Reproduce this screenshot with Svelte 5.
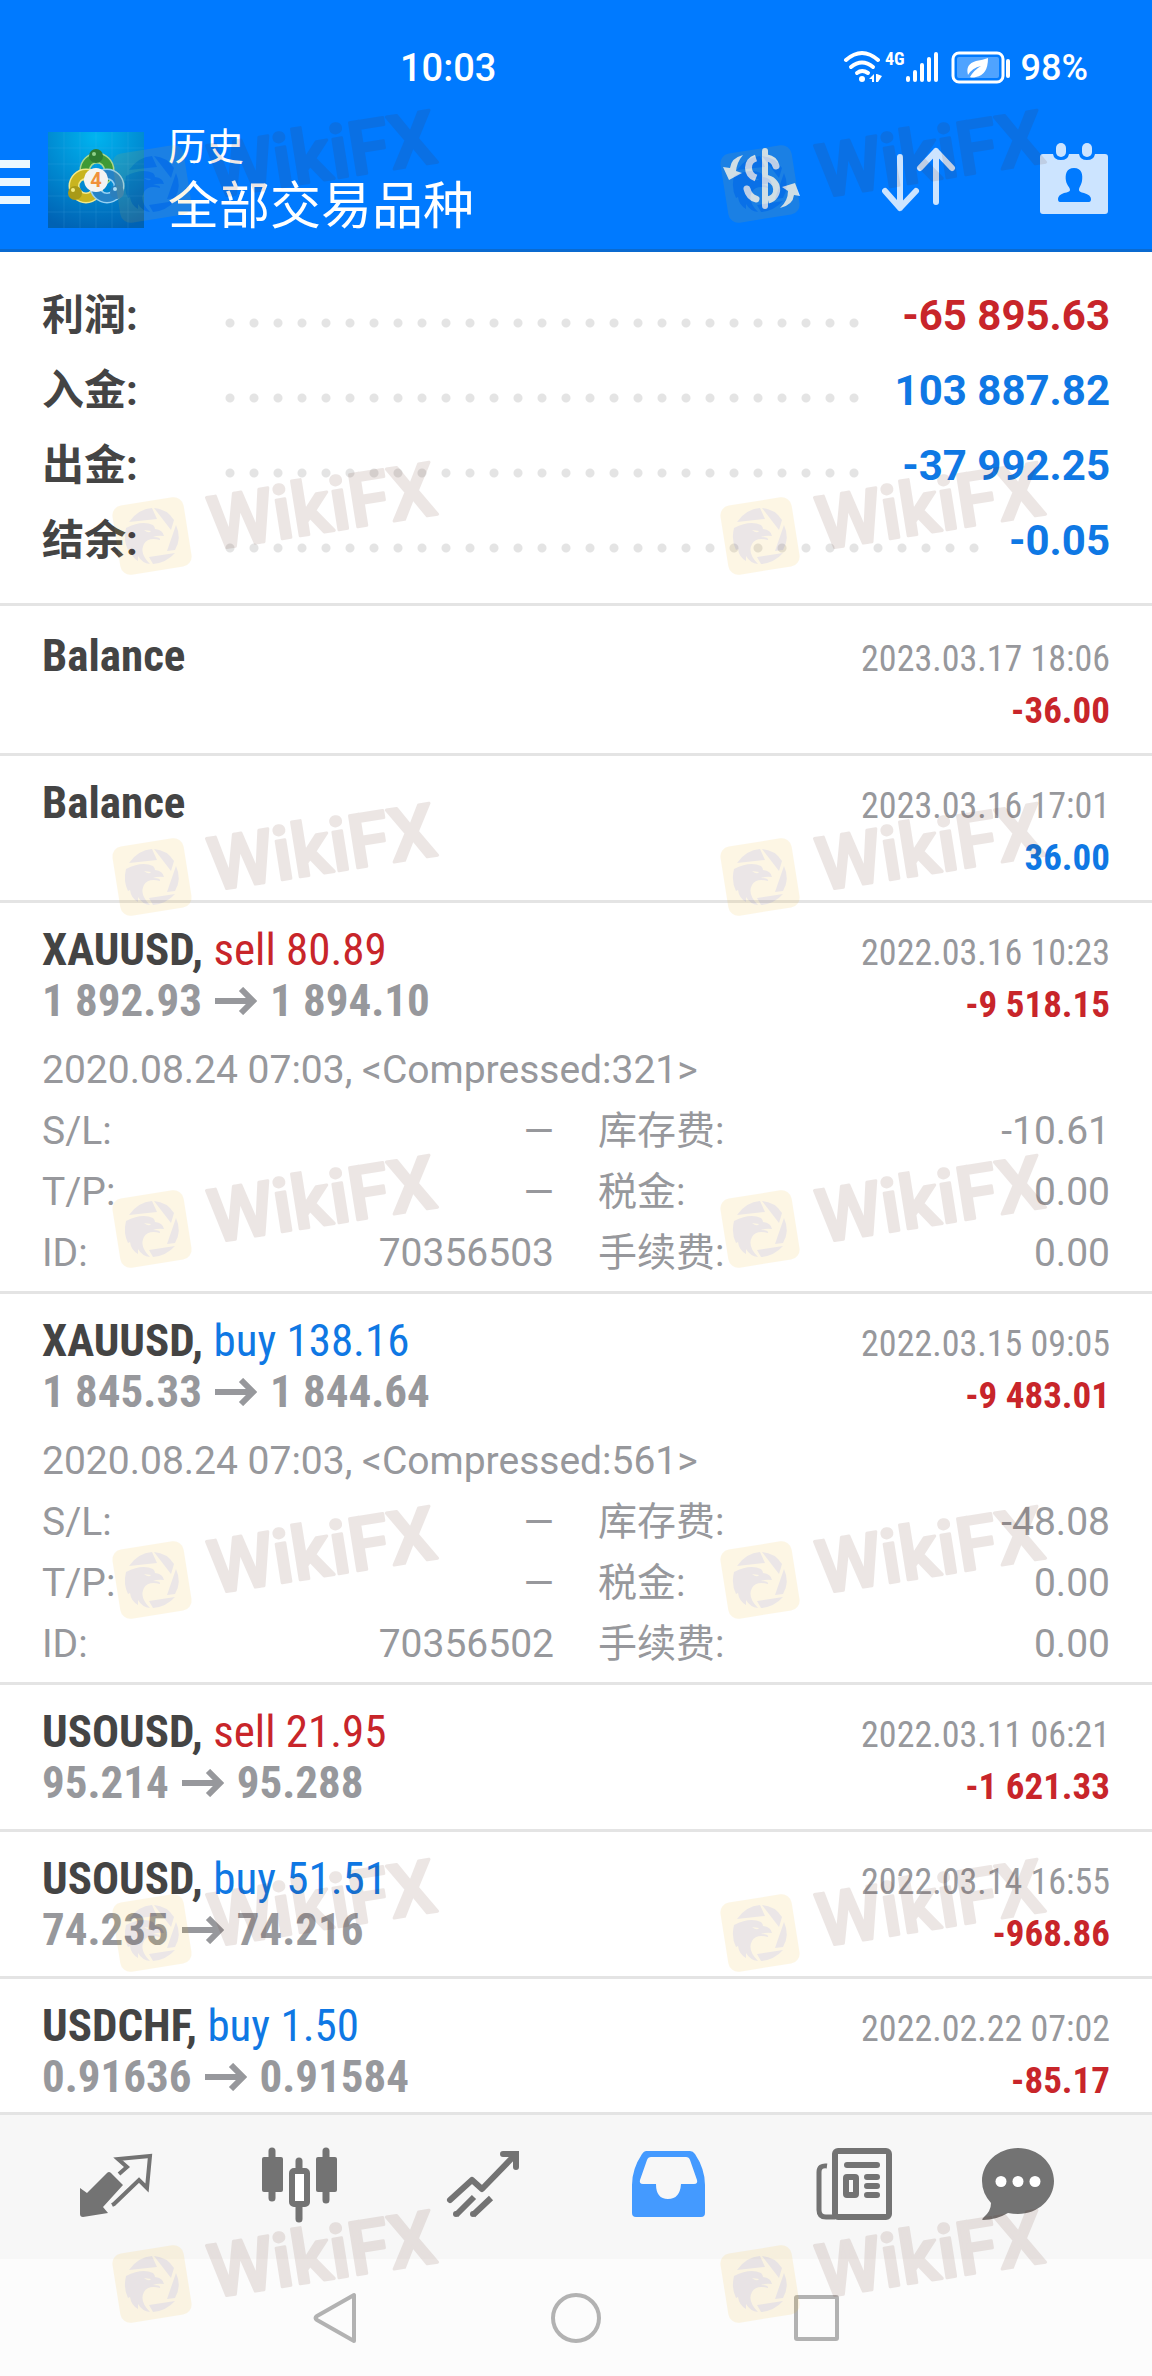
<script>
  const summary = [
    { label: '利润:', value: '-65 895.63', tone: 'red' },
    { label: '入金:', value: '103 887.82', tone: 'blue' },
    { label: '出金:', value: '-37 992.25', tone: 'blue' },
    { label: '结余:', value: '-0.05',      tone: 'blue' },
  ];

  const deals = [
    { symbol: 'Balance', time: '2023.03.17 18:06', profit: '-36.00' },
    { symbol: 'Balance', time: '2023.03.16 17:01', profit: '36.00' },
    {
      symbol: 'XAUUSD', side: 'sell', volume: '80.89', open: '1 892.93', close: '1 894.10',
      time: '2022.03.16 10:23', profit: '-9 518.15',
      note: '2020.08.24 07:03, <Compressed:321>', id: '70356503', swap: '-10.61',
    },
    {
      symbol: 'XAUUSD', side: 'buy', volume: '138.16', open: '1 845.33', close: '1 844.64',
      time: '2022.03.15 09:05', profit: '-9 483.01',
      note: '2020.08.24 07:03, <Compressed:561>', id: '70356502', swap: '-48.08',
    },
    { symbol: 'USOUSD', side: 'sell', volume: '21.95', open: '95.214', close: '95.288', time: '2022.03.11 06:21', profit: '-1 621.33' },
    { symbol: 'USOUSD', side: 'buy', volume: '51.51', open: '74.235', close: '74.216', time: '2022.03.14 16:55', profit: '-968.86' },
    { symbol: 'USDCHF', side: 'buy', volume: '1.50', open: '0.91636', close: '0.91584', time: '2022.02.22 07:02', profit: '-85.17' },
  ];

  const tabs = [
    { id: 'quotes',  label: '行情' },
    { id: 'charts',  label: '图表' },
    { id: 'trade',   label: '交易' },
    { id: 'history', label: '历史' },
    { id: 'news',    label: '新闻' },
    { id: 'chat',    label: '消息' },
  ];
  let activeTab = $state('history');

  // watermark tiles, [x, y] of the badge centre
  const marks = [184, 536, 877, 1229, 1580, 1933, 2284].flatMap((y) => [[152, y], [760, y]]);

  function details(deal) {
    return [
      ['S/L:', '—', '库存费:', deal.swap],
      ['T/P:', '—', '税金:', '0.00'],
      ['ID:', deal.id, '手续费:', '0.00'],
    ];
  }
</script>

<div class="screen">
  <header>
    <!-- ── Status bar ── -->
    <div class="status">
      <span class="clock">10:03</span>
      <div class="status-icons">
        <svg width="44" height="40" viewBox="0 0 44 40" fill="none" stroke="#fff" stroke-width="4" stroke-linecap="round">
          <path d="M5 12Q21 -2 37 12" />
          <path d="M10 19Q21 10 32 19" />
          <path d="M16 25Q21 21 27 25" />
          <circle cx="21" cy="31" r="3" fill="#fff" stroke="none" />
          <path d="M28 31L33 26V34H31V31ZM36 26L41 28L37 34H35V26Z" fill="#fff" stroke="none" />
        </svg>
        <span class="net">4G</span>
        <svg width="34" height="40" viewBox="0 0 34 40" stroke="#fff" stroke-width="4" stroke-linecap="round">
          <path d="M3 30V32M10 24V32M17 17V32M24 11V32M31 6V32" />
        </svg>
        <svg class="battery" width="62" height="40" viewBox="0 0 62 40">
          <rect x="2" y="5" width="50" height="29" rx="6" fill="none" stroke="#fff" stroke-width="3" />
          <rect x="6" y="9" width="42" height="21" rx="2" fill="#4fa3ff" />
          <path d="M57 13V28" stroke="#fff" stroke-width="4" stroke-linecap="round" />
          <path d="M17 27Q14 16 25 13Q32 12 37 10Q37 27 25 29Q21 30 19 29Q23 22 30 18Q21 20 17 27Z" fill="#fff" />
        </svg>
        <span class="percent">98%</span>
      </div>
    </div>

    <!-- ── App bar ── -->
    <div class="appbar">
      <button class="menu" aria-label="菜单">
        <svg width="30" height="48" viewBox="0 -4 30 48" fill="#ebf8ff">
          <path d="M0 0H30V8H0ZM0 18H30V26H0ZM0 36H30V44H0Z" />
        </svg>
      </button>
      <svg class="logo" width="96" height="96" viewBox="0 0 96 96">
        <defs>
          <radialGradient id="sky" cx="50%" cy="5%" r="100%">
            <stop offset="0" stop-color="#00b4f0" />
            <stop offset="0.55" stop-color="#0087cf" />
            <stop offset="1" stop-color="#0062b4" />
          </radialGradient>
        </defs>
        <rect width="96" height="96" fill="url(#sky)" />
        <path d="M16 0V96M32 0V96M48 0V96M64 0V96M80 0V96M0 16H96M0 32H96M0 48H96M0 64H96M0 80H96" stroke="#5cc4f0" stroke-opacity="0.15" />
        <g fill="none" stroke-linecap="round">
          <circle cx="49" cy="38" r="12" stroke="#a9d890" stroke-width="11" />
          <circle cx="49" cy="38" r="12" stroke="#3f9a35" stroke-width="8" />
          <circle cx="38" cy="54" r="12" stroke="#f3e98a" stroke-width="11" />
          <circle cx="38" cy="54" r="12" stroke="#c8b41f" stroke-width="8" />
          <circle cx="59" cy="54" r="12" stroke="#95d0f2" stroke-width="11" />
          <circle cx="59" cy="54" r="12" stroke="#2683c6" stroke-width="8" />
        </g>
        <circle cx="48" cy="24" r="7" fill="#2e7d32" />
        <circle cx="46" cy="22" r="2" fill="#8fd08a" />
        <circle cx="27" cy="61" r="7" fill="#a89a18" />
        <circle cx="25" cy="58" r="2" fill="#f2ea80" />
        <circle cx="69" cy="60" r="7" fill="#2b7fbd" />
        <circle cx="67" cy="57" r="2" fill="#a8dcf7" />
        <circle cx="48" cy="48" r="12" fill="#f4f4f2" />
        <text x="48" y="55" text-anchor="middle" font-size="20" font-weight="700" fill="#f0913a">4</text>
      </svg>
      <div class="titles">
        <span class="section">历史</span>
        <h1>全部交易品种</h1>
      </div>
      <div class="actions">
        <button aria-label="货币">
          <svg width="78" height="80" viewBox="0 0 78 80" fill="#cce4ff">
            <path d="M43 11V66" stroke="#cce4ff" stroke-width="6" stroke-linecap="round" />
            <g fill="none" stroke="#cce4ff" stroke-width="7">
              <path d="M34 18C24 21 24 34 34 38" />
              <path d="M45 18Q52 19 54 26" stroke-linecap="round" />
              <path d="M43 38C58 40 58 57 46 60" />
              <path d="M25 49Q27 57 34 59" stroke-linecap="round" />
            </g>
            <path d="M21 15Q9 18 8 28L1 27L7 40L20 33L14 31Q15 22 21 15Z" />
            <path d="M58 68Q71 65 72 55L78 56L73 43L60 47L66 51Q66 61 58 68Z" />
          </svg>
        </button>
        <button aria-label="排序">
          <svg width="76" height="80" viewBox="0 0 76 80" fill="none" stroke="#cce4ff" stroke-width="6" stroke-linecap="round" stroke-linejoin="round">
            <path d="M18 17V68M3 51L18 68L34 51M54 62V11M38 28L54 11L70 28" />
          </svg>
        </button>
        <button aria-label="日期">
          <svg width="68" height="80" viewBox="0 0 68 80" fill="#cce4ff">
            <path d="M3 14H13Q14 20 21 20T29 14H39Q40 20 47 20T55 14H65Q68 14 68 17V71Q68 74 65 74H3Q0 74 0 71V17Q0 14 3 14Z" />
            <rect x="16" y="3" width="10" height="14" rx="5" />
            <rect x="42" y="3" width="10" height="14" rx="5" />
            <path d="M34 28C42 28 43 35 42 41C41 46 39 47 39 50Q39 52 44 53Q51 55 51 59Q51 62 49 62H20Q18 62 18 59Q18 55 24 53Q30 52 30 50C30 47 27 46 26 41C25 35 26 28 34 28Z" fill="#007aff" />
          </svg>
        </button>
      </div>
    </div>
  </header>

  <main>
    <dl class="summary">
      {#each summary as row}
        <div class="sum-row">
          <dt>{row.label}</dt>
          <span class="leader"></span>
          <dd class={row.tone}>{row.value}</dd>
        </div>
      {/each}
    </dl>

    <ul class="deals">
      {#each deals as deal}
        <li class:open={deal.note}>
          <div class="head">
            <div class="left">
              <div class="name">
                {#if deal.side}
                  <b>{deal.symbol},</b> <span class:red={deal.side === 'sell'} class:blue={deal.side === 'buy'}>{deal.side} {deal.volume}</span>
                {:else}
                  <b>{deal.symbol}</b>
                {/if}
              </div>
              {#if deal.open}
                <div class="prices">
                  <span>{deal.open}</span>
                  <svg width="42" height="28" viewBox="0 0 42 28" fill="none" stroke="#97989c" stroke-width="6">
                    <path d="M0 14H38M26 2L38 14L26 26" />
                  </svg>
                  <span>{deal.close}</span>
                </div>
              {/if}
            </div>
            <div class="right">
              <time>{deal.time}</time>
              <b class={deal.profit.startsWith('-') ? 'red' : 'blue'}>{deal.profit}</b>
            </div>
          </div>
          {#if deal.note}
            <div class="extra">
              <p>{deal.note}</p>
              {#each details(deal) as [l1, v1, l2, v2]}
                <div class="pair"><span>{l1}</span><span>{v1}</span></div>
                <div class="pair"><span>{l2}</span><span>{v2}</span></div>
              {/each}
            </div>
          {/if}
        </li>
      {/each}
    </ul>
  </main>

  <nav class="tabs">
    {#each tabs as tab}
      <button class:active={activeTab === tab.id} aria-label={tab.label} onclick={() => (activeTab = tab.id)}>
        <svg width="80" height="80" viewBox="0 0 80 80" fill="currentColor">
          {#if tab.id === 'quotes'}
            <path d="M4 41L11 46L31 26Q33 24 35 26L47 38L27 60L32 66L7 70Q4 70 4 67Z" />
            <path d="M36 58L38 57L63 33L71 41L74 9L42 12L51 20L43 27" fill="none" stroke="currentColor" stroke-width="4" />
          {:else if tab.id === 'charts'}
            <path d="M12 4V51M39 14V22M39 58V72M66 4V53" stroke="currentColor" stroke-width="7" stroke-linecap="round" />
            <rect x="2" y="10" width="21" height="35" rx="2" />
            <rect x="56" y="10" width="21" height="35" rx="2" />
            <rect x="32" y="24" width="15" height="33" rx="2" fill="#fff" stroke="currentColor" stroke-width="6" />
          {:else if tab.id === 'trade'}
            <g fill="none" stroke="currentColor" stroke-width="6">
              <path d="M6 53L28 33L38 42L71 8" stroke-linejoin="round" stroke-linecap="round" />
              <path d="M59 7H72V20" stroke-linecap="round" />
              <path d="M12 68L30 50M29 68L47 51" />
            </g>
            <circle cx="12" cy="67" r="3" />
            <circle cx="29" cy="67" r="3" />
          {:else if tab.id === 'history'}
            <path fill-rule="evenodd" d="M18 4H62Q65 4 67 7Q77 22 77 38V66Q77 70 73 70H8Q4 70 4 66V38Q4 22 14 7Q16 4 18 4ZM23 10Q20 10 19 13L12 33Q11 37 15 37H28Q28 52 40 52T53 37H66Q70 37 69 33L62 13Q61 10 58 10Z" />
          {:else if tab.id === 'news'}
            <rect x="23" y="4" width="54" height="66" rx="3" fill="none" stroke="currentColor" stroke-width="6" />
            <path d="M15 19Q7 18 7 25V63Q7 70 14 70H23" fill="none" stroke="currentColor" stroke-width="5" />
            <rect x="32" y="15" width="36" height="6" rx="3" />
            <rect x="34" y="30" width="10" height="18" rx="1" fill="none" stroke="currentColor" stroke-width="6" />
            <path d="M55 30H65M55 39H65M55 48H65" stroke="currentColor" stroke-width="6" stroke-linecap="round" />
          {:else}
            <path d="M40 1C60 1 76 16 76 34S60 67 40 67Q35 67 30 66Q18 73 5 73Q3 73 6 70Q13 64 13 56Q4 46 4 34C4 16 20 1 40 1Z" />
            <g fill="#fff"><circle cx="23" cy="34.5" r="5.5" /><circle cx="40" cy="34.5" r="5.5" /><circle cx="57" cy="34.5" r="5.5" /></g>
          {/if}
        </svg>
      </button>
    {/each}
  </nav>

  <div class="system">
    <button aria-label="返回">
      <svg width="50" height="54" viewBox="0 0 50 54"><path d="M43 4V50L6 29Q3 27 6 25Z" /></svg>
    </button>
    <button aria-label="主屏幕">
      <svg width="50" height="54" viewBox="0 0 50 54"><ellipse cx="25" cy="27" rx="23" ry="23" /></svg>
    </button>
    <button aria-label="最近任务">
      <svg width="50" height="54" viewBox="0 0 50 54"><rect x="5" y="6" width="41" height="42" rx="1" /></svg>
    </button>
  </div>

  <!-- ── Watermark ── -->
  <svg class="watermark" aria-hidden="true">
    {#each marks as [x, y]}
      <g transform="translate({x} {y})" opacity="0.11">
        <rect x="-36" y="-35" width="72" height="70" rx="10" fill="#f0b419" transform="rotate(-9)" />
        <g fill="#502832">
          <path d="M-23 -14Q-14 -27 0 -28L5 -17Z" />
          <path d="M2 -28Q15 -27 22 -16L19 -6Z" />
          <path d="M24 -11Q30 2 23 14L15 15Z" />
          <path d="M23 17Q14 27 1 28L-3 21Z" />
          <path d="M-26 -8Q-10 -16 1 -11Q3 -9 3 -7Q11 -6 12 0Q6 -1 1 1Q9 1 8 4Q-4 1 -8 8Q-13 17 -2 28Q-10 27 -14 20L-14 25Q-21 21 -22 13L-24 14Q-29 4 -26 -8Z" />
        </g>
        <path d="M-8 -6L-1 -5Q-3 -2 -8 -6Z" fill="#f0b419" />
        <text x="58" y="23" transform="rotate(-9)">WikiFX</text>
      </g>
    {/each}
  </svg>
</div>

<style>
  :global(body) { margin: 0; background: #fff; }

  .screen {
    position: relative;
    display: flex;
    flex-direction: column;
    height: 100vh;
    overflow: hidden;
    color: #444;
    background: #fff;
    font-family: Roboto, 'Noto Sans CJK SC', sans-serif;
  }
  button {
    display: flex;
    align-items: center;
    justify-content: center;
    padding: 0;
    border: 0;
    background: none;
    color: inherit;
    cursor: pointer;
  }
  svg { display: block; flex-shrink: 0; }
  .red  { color: #c8252a; }
  .blue { color: #0f78e4; }

  /* ── Header ── */
  header {
    flex-shrink: 0;
    color: #fff;
    background: #007aff;
    border-bottom: 3px solid #0a6ad0;
  }
  .status {
    display: flex;
    align-items: center;
    justify-content: space-between;
    box-sizing: border-box;
    height: 111px;
    padding: 25px 64px 0 400px;
  }
  .clock { font-size: 38px; font-weight: 500; }
  .status-icons { display: flex; align-items: center; }
  .net {
    align-self: flex-start;
    font-family: 'Roboto Condensed', Roboto, sans-serif;
    font-size: 18px;
    line-height: 24px;
    font-weight: 700;
  }
  .battery { margin: 0 8px 0 12px; }
  .percent { font-size: 36px; font-weight: 500; }

  .appbar {
    display: flex;
    align-items: center;
    height: 138px;
    padding-right: 44px;
  }
  .logo { margin: 0 24px 0 18px; }
  .titles { display: flex; flex-direction: column; padding-top: 4px; }
  .section { font-size: 38px; line-height: 50px; }
  h1 { margin: 0; font-size: 51px; line-height: 70px; font-weight: 400; }
  .actions { display: flex; gap: 82px; margin-left: auto; }

  /* ── Summary ── */
  main { flex: 1; min-height: 0; overflow: hidden; }
  .summary {
    margin: 0 0 3px;
    padding: 26px 42px 25px;
    border-bottom: 3px solid #e4e4e4;
  }
  .sum-row {
    display: flex;
    font-size: 42px;
    line-height: 75px;
    font-weight: 700;
  }
  dt { width: 176px; }
  dd { margin: 0; }
  .leader {
    flex: 1;
    height: 24px;
    margin: 33px 30px 0 0;
    background: radial-gradient(circle, #e4e4e4 4px, transparent 5px) 0 0 / 24px 24px repeat-x;
  }

  /* ── Deals ── */
  .deals { margin: 0; padding: 0; list-style: none; }
  li { padding: 21px 42px 23px; border-bottom: 3px solid #e4e4e4; }
  li.open { padding-bottom: 7px; }
  .head { display: flex; justify-content: space-between; height: 100px; }
  .name, .prices {
    font-family: 'Roboto Condensed', Roboto, sans-serif;
    font-size: 45px;
    line-height: 51px;
    white-space: nowrap;
  }
  .prices {
    display: flex;
    align-items: center;
    gap: 13px;
    color: #97989c;
    font-weight: 700;
  }
  .right {
    display: flex;
    flex-direction: column;
    padding-top: 4px;
    font-family: 'Roboto Condensed', Roboto, sans-serif;
    font-size: 37px;
    line-height: 51px;
    text-align: right;
  }
  time { color: #97989c; font-size: 36px; }
  .extra {
    display: grid;
    grid-template-columns: 1fr 1fr;
    column-gap: 44px;
    margin-top: 16px;
    color: #97989c;
    font-size: 39px;
    line-height: 61px;
  }
  .extra p { grid-column: 1 / -1; margin: 0; }
  .pair { display: flex; justify-content: space-between; height: 61px; }

  /* ── Bottom bars ── */
  .tabs {
    display: grid;
    grid-template-columns: repeat(5, 184fr) 148fr;
    flex-shrink: 0;
    height: 144px;
    padding: 0 60px 0 24px;
    color: #737373;
    background: #f7f7f7;
    border-top: 3px solid #e4e4e4;
  }
  .tabs .active { color: #449aff; }
  .system {
    display: flex;
    flex-shrink: 0;
    justify-content: center;
    height: 117px;
    background: #fcfcfc;
  }
  .system button { width: 240px; }
  .system svg { fill: none; stroke: #b2b2b2; stroke-width: 4; stroke-linejoin: round; }

  .watermark {
    position: absolute;
    inset: 0;
    width: 100%;
    height: 100%;
    pointer-events: none;
  }
  .watermark text {
    fill: #5a2414;
    stroke: #5a2414;
    stroke-width: 3;
    stroke-linejoin: round;
    font-size: 74px;
    font-weight: 500;
  }
</style>
